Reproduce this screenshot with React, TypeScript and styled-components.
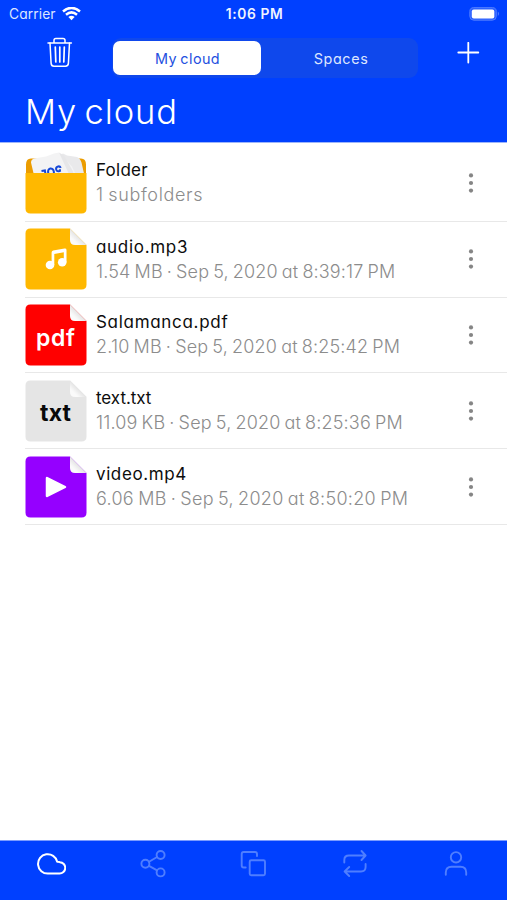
import React from "react";
import styled, { createGlobalStyle } from "styled-components";

const BLUE = "#0040ff";

const GlobalStyle = createGlobalStyle`
  *, *::before, *::after { box-sizing: border-box; }
  body {
    margin: 0;
    background: #fff;
    font-family: Inter, "Liberation Sans", sans-serif;
    font-feature-settings: "cv11";
    overflow: hidden;
  }
  button { font: inherit; font-feature-settings: inherit; border: 0; padding: 0; background: none; color: inherit; }
  svg { display: block; flex: none; }
`;

const Screen = styled.div`
  width: 507px;
  height: 900px;
  display: flex;
  flex-direction: column;
  background: #fff;
`;

const Header = styled.header`
  height: 143px;
  flex: none;
  background: ${BLUE};
  color: #fff;
  border-bottom: 1px solid #9db5fa;
`;

const StatusBar = styled.div`
  height: 28px;
  display: grid;
  grid-template-columns: 1fr auto 1fr;
  align-items: center;
  padding: 0 7px 0 9px;
  font-size: 13.8px;
  line-height: 28px;
`;

const Carrier = styled.div`
  display: flex;
  align-items: center;
  gap: 6px;
  letter-spacing: 0.1px;
  color: #dce5ff;
`;

const Clock = styled.div`
  font-weight: 600;
  letter-spacing: 0.6px;
  font-size: 13.8px;
  color: #f0f4ff;
`;

const BatterySlot = styled.div`
  justify-self: end;
`;

const Toolbar = styled.div`
  height: 50px;
  margin-top: 10px;
  display: flex;
  align-items: flex-start;
`;

const TrashButton = styled.button`
  margin: -1px 0 0 47px;
  width: 26px;
`;

const AddButton = styled.button`
  margin: 4px 0 0 38px;
`;

const Segments = styled.div`
  display: flex;
  width: 306px;
  height: 40px;
  margin-left: 39px;
  padding: 3px 1px;
  border-radius: 9px;
  background: #0f48ec;
`;

const Segment = styled.button<{ $active?: boolean }>`
  width: ${(p) => (p.$active ? "149px" : "157px")};
  height: 34px;
  border-radius: 7px;
  font-size: 14.4px;
  line-height: 33px;
  padding-left: ${(p) => (p.$active ? "1px" : "4px")};
  letter-spacing: ${(p) => (p.$active ? "0.4px" : "0.6px")};
  word-spacing: -1px;
  background: ${(p) => (p.$active ? "#fff" : "transparent")};
  color: ${(p) => (p.$active ? "#244fe0" : "#dce5ff")};
`;

const Title = styled.h1`
  margin: 3px 0 0 25px;
  font-size: 34.5px;
  line-height: 41px;
  font-weight: 350;
  letter-spacing: 0.85px;
  word-spacing: -3px;
`;

const List = styled.ul`
  flex: 1;
  margin: 0;
  padding: 3px 0 0 25px;
  list-style: none;
`;

const Row = styled.li`
  height: 75.8px;
  display: flex;
  align-items: center;
  border-bottom: 1px solid #e8e8e8;
`;

const Details = styled.div`
  flex: 1;
  margin: 0 0 0 9px;
  ${Row}:first-child & { margin-top: -1px; }
`;

const Name = styled.div<{ $track: number }>`
  font-size: 17px;
  line-height: 25px;
  color: #0c0c0c;
  letter-spacing: ${(p) => p.$track}px;
  white-space: nowrap;
`;

const Meta = styled.div<{ $track: number }>`
  font-size: 18px;
  line-height: 24px;
  font-weight: 350;
  color: #8c8c8c;
  letter-spacing: ${(p) => p.$track}px;
  word-spacing: -1.2px;
  white-space: nowrap;
`;

const More = styled.button`
  width: 10px;
  margin-right: 31px;
`;

const TabBar = styled.nav`
  height: 60px;
  flex: none;
  display: grid;
  grid-template-columns: repeat(5, 1fr);
  align-items: start;
  padding-top: 8px;
  border-top: 1px solid #7b9cff;
  background: ${BLUE};
`;

const TabItem = styled.button<{ $active?: boolean }>`
  display: flex;
  justify-content: center;
  color: ${(p) => (p.$active ? "#fff" : "#4f7eff")};
`;

const Line = styled.svg`
  fill: none;
  stroke: currentColor;
  stroke-linecap: round;
  stroke-linejoin: round;
`;

const Glyph = styled.text<{ $dark?: boolean }>`
  font-family: Inter, "Liberation Sans", sans-serif;
  font-weight: ${(p) => (p.$dark ? 700 : 600)};
  font-size: 23px;
  fill: ${(p) => (p.$dark ? "#090909" : "#fff")};
`;

const FolderIcon = () => (
  <svg width="62" height="62" viewBox="0 -1.5 62 62">
    <path d="M1 26V11Q1 5 6 5H56Q61 5 61 11V26Z" fill="#eb9c00" />
    <path d="M30 4L38 0 42 2 52 3.5Q55 4.5 56.5 9L59 20H9Z" fill="#e9e9eb" />
    <path d="M6 9Q6 6 9 5L21 3 29 0 34 -1 47 13 53 26H10Z" fill="#f3f3f4" />
    <path d="M34 -1L39 2 48 18 50 25H46Z" fill="#e6e6e8" />
    <g fill="none" stroke="#1648d8" strokeWidth="2">
      <path d="M16.5 17.6l3.4-.6.8 5" />
      <ellipse cx="26" cy="18.6" rx="2.9" ry="3.7" transform="rotate(-12 26 18.6)" />
      <path d="M35.8 14.4q-1-2.1-3.2-1.3-2.1 1-1.3 3.3.9 2.1 3.7.9l-.3-1.6" />
    </g>
    <path d="M.5 19.5H61.5V55Q61.5 60 56.5 60H5.5Q.5 60 .5 55Z" fill="#ffb800" />
  </svg>
);

const FileIcon = ({ id, color, children }: { id: string; color: string; children: React.ReactNode }) => (
  <svg width="62" height="62" viewBox="0 0 62 62">
    <defs>
      <linearGradient id={id} x1="0.25" y1="0.75" x2="0.6" y2="0.4">
        <stop offset="0" stopColor="#fafafa" />
        <stop offset="1" stopColor="#dcdcdc" />
      </linearGradient>
    </defs>
    <path d="M5.5 .5H45L61.5 17V56.5Q61.5 61.5 56.5 61.5H5.5Q.5 61.5 .5 56.5V5.5Q.5 .5 5.5 .5Z" fill={color} />
    <path d="M45 .5L61.5 17H50Q45 17 45 12Z" fill={`url(#${id})`} />
    {children}
  </svg>
);

const AudioArt = () => (
  <g fill="#fff">
    <circle cx="25" cy="37" r="4.3" />
    <circle cx="37.2" cy="34.3" r="4.3" />
    <path d="M26.6 37V24.5Q26.6 23 28.1 22.6L39.5 20.6Q41.5 20.4 41.5 22V34.3H38.8V24.2L29.3 26V37Z" />
  </g>
);

type Entry = { name: string; meta: string; nameTrack: number; metaTrack: number; icon: React.ReactNode };

const entries: Entry[] = [
  { name: "Folder", meta: "1 subfolders", nameTrack: 0.25, metaTrack: 0.65, icon: <FolderIcon /> },
  {
    name: "audio.mp3", meta: "1.54 MB · Sep 5, 2020 at 8:39:17 PM", nameTrack: 0.7, metaTrack: 0.16,
    icon: <FileIcon id="fold-audio" color="#ffb800"><AudioArt /></FileIcon>,
  },
  {
    name: "Salamanca.pdf", meta: "2.10 MB · Sep 5, 2020 at 8:25:42 PM", nameTrack: 0.7, metaTrack: 0.18,
    icon: <FileIcon id="fold-pdf" color="#ff0000"><Glyph x="11" y="41.5" textLength="39">pdf</Glyph></FileIcon>,
  },
  {
    name: "text.txt", meta: "11.09 KB · Sep 5, 2020 at 8:25:36 PM", nameTrack: -0.05, metaTrack: 0.17,
    icon: <FileIcon id="fold-text" color="#e5e5e5"><Glyph $dark x="15" y="41" textLength="31">txt</Glyph></FileIcon>,
  },
  {
    name: "video.mp4", meta: "6.06 MB · Sep 5, 2020 at 8:50:20 PM", nameTrack: 0.6, metaTrack: 0.3,
    icon: (
      <FileIcon id="fold-video" color="#9500ff">
        <path d="M22 22L40 31 22 40Z" fill="#fff" stroke="#fff" strokeWidth="2.5" strokeLinejoin="round" />
      </FileIcon>
    ),
  },
];

const WifiIcon = () => (
  <svg width="19" height="14" viewBox="0 0.5 19 14" fill="none" stroke="#fff" strokeWidth="2.5">
    <path d="M1 5Q9.5-2.2 18 5" />
    <path d="M4 8.2Q9.5 3.6 15 8.2" />
    <path d="M6.4 10.5Q9.5 8.1 12.6 10.5L9.5 13.7Z" fill="#fff" stroke="none" />
  </svg>
);

const BatteryIcon = () => (
  <svg width="31" height="15" viewBox="0 1 31 15">
    <rect x=".8" y="1.6" width="26.5" height="12.6" rx="4" fill="#2c60ff" stroke="#4f7cff" strokeWidth="1" />
    <rect x="2.8" y="3.4" width="22.5" height="9" rx="2" fill="#fff" />
    <path d="M28.8 5.6Q31.2 7.8 28.8 10.1Z" fill="#4f7cff" />
  </svg>
);

const TrashIcon = () => (
  <Line width="26" height="31" viewBox="0 0 26 31" strokeWidth="1.5">
    <path d="M1 6H24.4M7 6V3.3Q7 1.5 8.8 1.5H16Q18 1.5 18 3.3V6" />
    <path d="M3 6L4.1 26.4Q4.3 29.2 7 29.2H18.5Q21.2 29.2 21.4 26.4L22.5 6" />
    <path d="M8.3 10L8.8 25M12.8 10V25M17.3 10L16.8 25" strokeWidth="1.7" />
  </Line>
);

const DotsIcon = () => (
  <svg width="10" height="22" viewBox="0 0 10 22" fill="#858585">
    <circle cx="5" cy="3.4" r="2.1" /><circle cx="5" cy="11" r="2.1" /><circle cx="5" cy="18.6" r="2.1" />
  </svg>
);

const TabIcon = ({ active, children }: { active?: boolean; children: React.ReactNode }) => (
  <Line width="30" height="30" viewBox="0 0 30 30" strokeWidth={active ? 2 : 1.9}>{children}</Line>
);

const App = () => (
  <>
    <GlobalStyle />
    <Screen>
      <Header>
        <StatusBar>
          <Carrier><span>Carrier</span><WifiIcon /></Carrier>
          <Clock>1:06 PM</Clock>
          <BatterySlot><BatteryIcon /></BatterySlot>
        </StatusBar>
        <Toolbar>
          <TrashButton aria-label="Trash"><TrashIcon /></TrashButton>
          <Segments>
            <Segment $active>My cloud</Segment>
            <Segment>Spaces</Segment>
          </Segments>
          <AddButton aria-label="Add">
            <Line width="24" height="24" viewBox="0 0 24 24" strokeWidth="1.8"><path d="M2.3 10.5H22.3M12.3 .8V20.5" /></Line>
          </AddButton>
        </Toolbar>
        <Title>My cloud</Title>
      </Header>
      <List>
        {entries.map((e) => (
          <Row key={e.name}>
            {e.icon}
            <Details>
              <Name $track={e.nameTrack}>{e.name}</Name>
              <Meta $track={e.metaTrack}>{e.meta}</Meta>
            </Details>
            <More aria-label="More"><DotsIcon /></More>
          </Row>
        ))}
      </List>
      <TabBar>
        <TabItem $active aria-label="Cloud">
          <TabIcon active><path d="M12 24.6H23.3A5.7 5.7 0 0 0 23.8 13.2Q22.6 12.5 21.2 12.7A9.7 9.7 0 1 0 12 24.6Z" /></TabIcon>
        </TabItem>
        <TabItem aria-label="Shared">
          <TabIcon><circle cx="23.6" cy="6" r="4" /><circle cx="8.4" cy="14.8" r="4" /><circle cx="23.6" cy="23.4" r="4" /><path d="M12 12.7L20.1 8M12 16.9L20.1 21.4" /></TabIcon>
        </TabItem>
        <TabItem aria-label="Copies">
          <TabIcon><rect x="11.7" y="11.2" width="15.3" height="15" rx="1.5" /><path d="M7.7 18.5H5.7Q3.7 18.5 3.7 16.5V5Q3.7 3 5.7 3H17Q19 3 19 5V7" /></TabIcon>
        </TabItem>
        <TabItem aria-label="Sync">
          <TabIcon><path d="M21.5 2L25.6 6.5 21.5 11M25.6 6.5H9Q4.3 6.5 4.3 11V13.5M9.2 18L4.6 22.5 9.2 27M4.6 22.5H21Q25.6 22.5 25.6 18V15" /></TabIcon>
        </TabItem>
        <TabItem aria-label="Account">
          <TabIcon><circle cx="15" cy="8.3" r="5.2" /><path d="M4.8 25.8V23.5Q4.8 17.8 10.5 17.8H19.5Q25.2 17.8 25.2 23.5V25.8" /></TabIcon>
        </TabItem>
      </TabBar>
    </Screen>
  </>
);

export default App;
